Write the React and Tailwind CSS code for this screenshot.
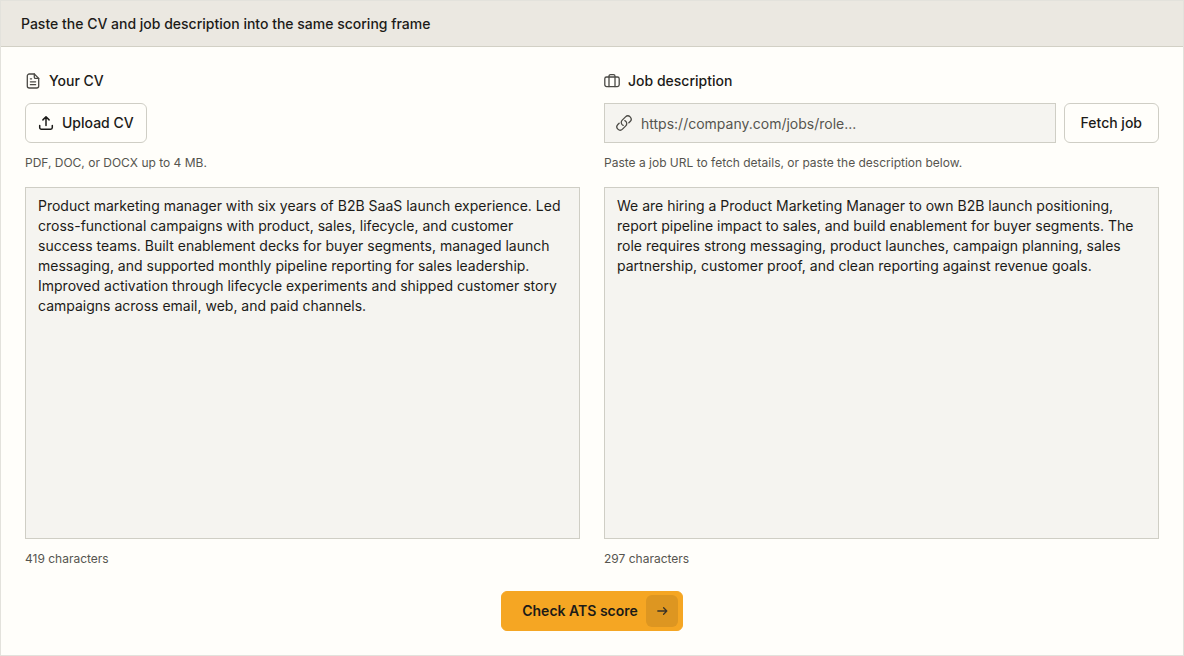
import { useState } from "react";

function Icon({ children, viewBox = "0 0 16 16", className = "" }) {
  return (
    <svg
      viewBox={viewBox}
      fill="none"
      stroke="currentColor"
      strokeWidth="1.3"
      strokeLinecap="round"
      strokeLinejoin="round"
      aria-hidden="true"
      className={`size-4 shrink-0 ${className}`}
    >
      {children}
    </svg>
  );
}

function FileIcon() {
  return (
    <Icon className="text-[#4b4a45]">
      <path d="M9.300 1H4.300a2 2 0 0 0-2 2v10a2 2 0 0 0 2 2h7.400a2 2 0 0 0 2-2V5.400z" />
      <path d="M9.300 1V4.200A1.200 1.200 0 0 0 10.500 5.400H13.700" />
      <path d="M5.400 5.800h1.200M5.400 8.800h5.200M5.400 11.700h5.200" />
    </Icon>
  );
}

function BriefcaseIcon() {
  return (
    <Icon className="text-[#4b4a45]">
      <rect x="0.800" y="4" width="14.400" height="9.600" rx="1.800" />
      <path d="M5 13.600V3.200A1.600 1.600 0 0 1 6.600 1.600h2.800A1.600 1.600 0 0 1 11 3.200v10.400" />
    </Icon>
  );
}

function UploadIcon() {
  return (
    <Icon>
      <g strokeWidth="1.500">
        <path d="M8 10.400V2M4.900 4.900 8 1.800 11.100 4.900" />
        <path d="M1.700 10.400v2.200a1.600 1.600 0 0 0 1.600 1.600h9.400a1.600 1.600 0 0 0 1.600-1.600v-2.200" />
      </g>
    </Icon>
  );
}

function LinkIcon() {
  return (
    <Icon
      viewBox="1 1 22 22"
      className="pointer-events-none absolute top-3 left-3 text-[#4b4a45]"
    >
      <path
        strokeWidth="1.800"
        d="M13.190 8.688a4.500 4.500 0 0 1 1.242 7.244l-4.500 4.500a4.500 4.500 0 0 1-6.364-6.364l1.757-1.757m13.350-.622 1.757-1.757a4.500 4.500 0 0 0-6.364-6.364l-4.500 4.500a4.500 4.500 0 0 0 1.242 7.244"
      />
    </Icon>
  );
}

function ArrowIcon() {
  return (
    <Icon className="text-[#3a3327]">
      <path d="M3.800 8h9M9.600 4.800 12.800 8l-3.200 3.200" />
    </Icon>
  );
}

function TextField({ id, value, onChange }) {
  return (
    <>
      <textarea
        id={id}
        value={value}
        onChange={(e) => onChange(e.target.value)}
        spellCheck={false}
        className="mt-4 block h-88 w-full resize-none border border-[#cfcec5] bg-[#f5f4f0] px-3 py-2 text-sm leading-5 text-[#1c1b18] outline-none"
      />
      <p className="mt-3 text-xs leading-4 text-[#56554f]">{value.length} characters</p>
    </>
  );
}

const CV_TEXT =
  "Product marketing manager with six years of B2B SaaS launch experience. Led cross-functional campaigns with product, sales, lifecycle, and customer success teams. Built enablement decks for buyer segments, managed launch messaging, and supported monthly pipeline reporting for sales leadership. Improved activation through lifecycle experiments and shipped customer story campaigns across email, web, and paid channels.";

const JOB_TEXT =
  "We are hiring a Product Marketing Manager to own B2B launch positioning, report pipeline impact to sales, and build enablement for buyer segments. The role requires strong messaging, product launches, campaign planning, sales partnership, customer proof, and clean reporting against revenue goals.";

export default function App() {
  const [cv, setCv] = useState(CV_TEXT);
  const [job, setJob] = useState(JOB_TEXT);
  const [url, setUrl] = useState("");

  return (
    <main className="border border-[#e3e2dc] bg-[#fffefa] font-['Inter',sans-serif] text-sm text-[#1c1b18]">
      <header className="border-b border-[#d2d0c5] bg-[#ebe8e1] px-5 py-3">
        <h1 className="font-medium leading-[21px]">
          Paste the CV and job description into the same scoring frame
        </h1>
      </header>

      <form className="p-6" onSubmit={(e) => e.preventDefault()}>
        <div className="grid grid-cols-2 gap-6">
          <section>
            <label htmlFor="cv" className="flex items-center gap-2 font-medium leading-5">
              <FileIcon />
              Your CV
            </label>
            <button
              type="button"
              className="mt-3 flex h-10 items-center gap-2 rounded-md border border-[#cfcec5] px-3 font-medium"
            >
              <UploadIcon />
              Upload CV
            </button>
            <p className="mt-3 text-xs leading-4 text-[#56554f]">PDF, DOC, or DOCX up to 4 MB.</p>
            <TextField id="cv" value={cv} onChange={setCv} />
          </section>

          <section>
            <label htmlFor="job" className="flex items-center gap-2 font-medium leading-5">
              <BriefcaseIcon />
              Job description
            </label>
            <div className="mt-3 flex gap-2">
              <div className="relative min-w-0 flex-1">
                <LinkIcon />
                <input
                  type="url"
                  aria-label="Job URL"
                  value={url}
                  onChange={(e) => setUrl(e.target.value)}
                  placeholder="https://company.com/jobs/role..."
                  className="block h-10 w-full border border-[#cfcec5] bg-[#f5f4f0] pr-3 pl-9 outline-none placeholder:text-[#56554f]"
                />
              </div>
              <button
                type="button"
                className="h-10 rounded-md border border-[#cfcec5] px-4 font-medium"
              >
                Fetch job
              </button>
            </div>
            <p className="mt-3 text-xs leading-4 text-[#56554f]">
              Paste a job URL to fetch details, or paste the description below.
            </p>
            <TextField id="job" value={job} onChange={setJob} />
          </section>
        </div>

        <div className="mt-6 flex justify-center">
          <button
            type="submit"
            className="flex h-10 items-center gap-2 rounded-md border border-[#f5a623] bg-[#f5a623] pr-1 pl-5 font-semibold"
          >
            Check ATS score
            <span className="flex size-8 items-center justify-center rounded-md bg-[#dd9621]">
              <ArrowIcon />
            </span>
          </button>
        </div>
      </form>
    </main>
  );
}
